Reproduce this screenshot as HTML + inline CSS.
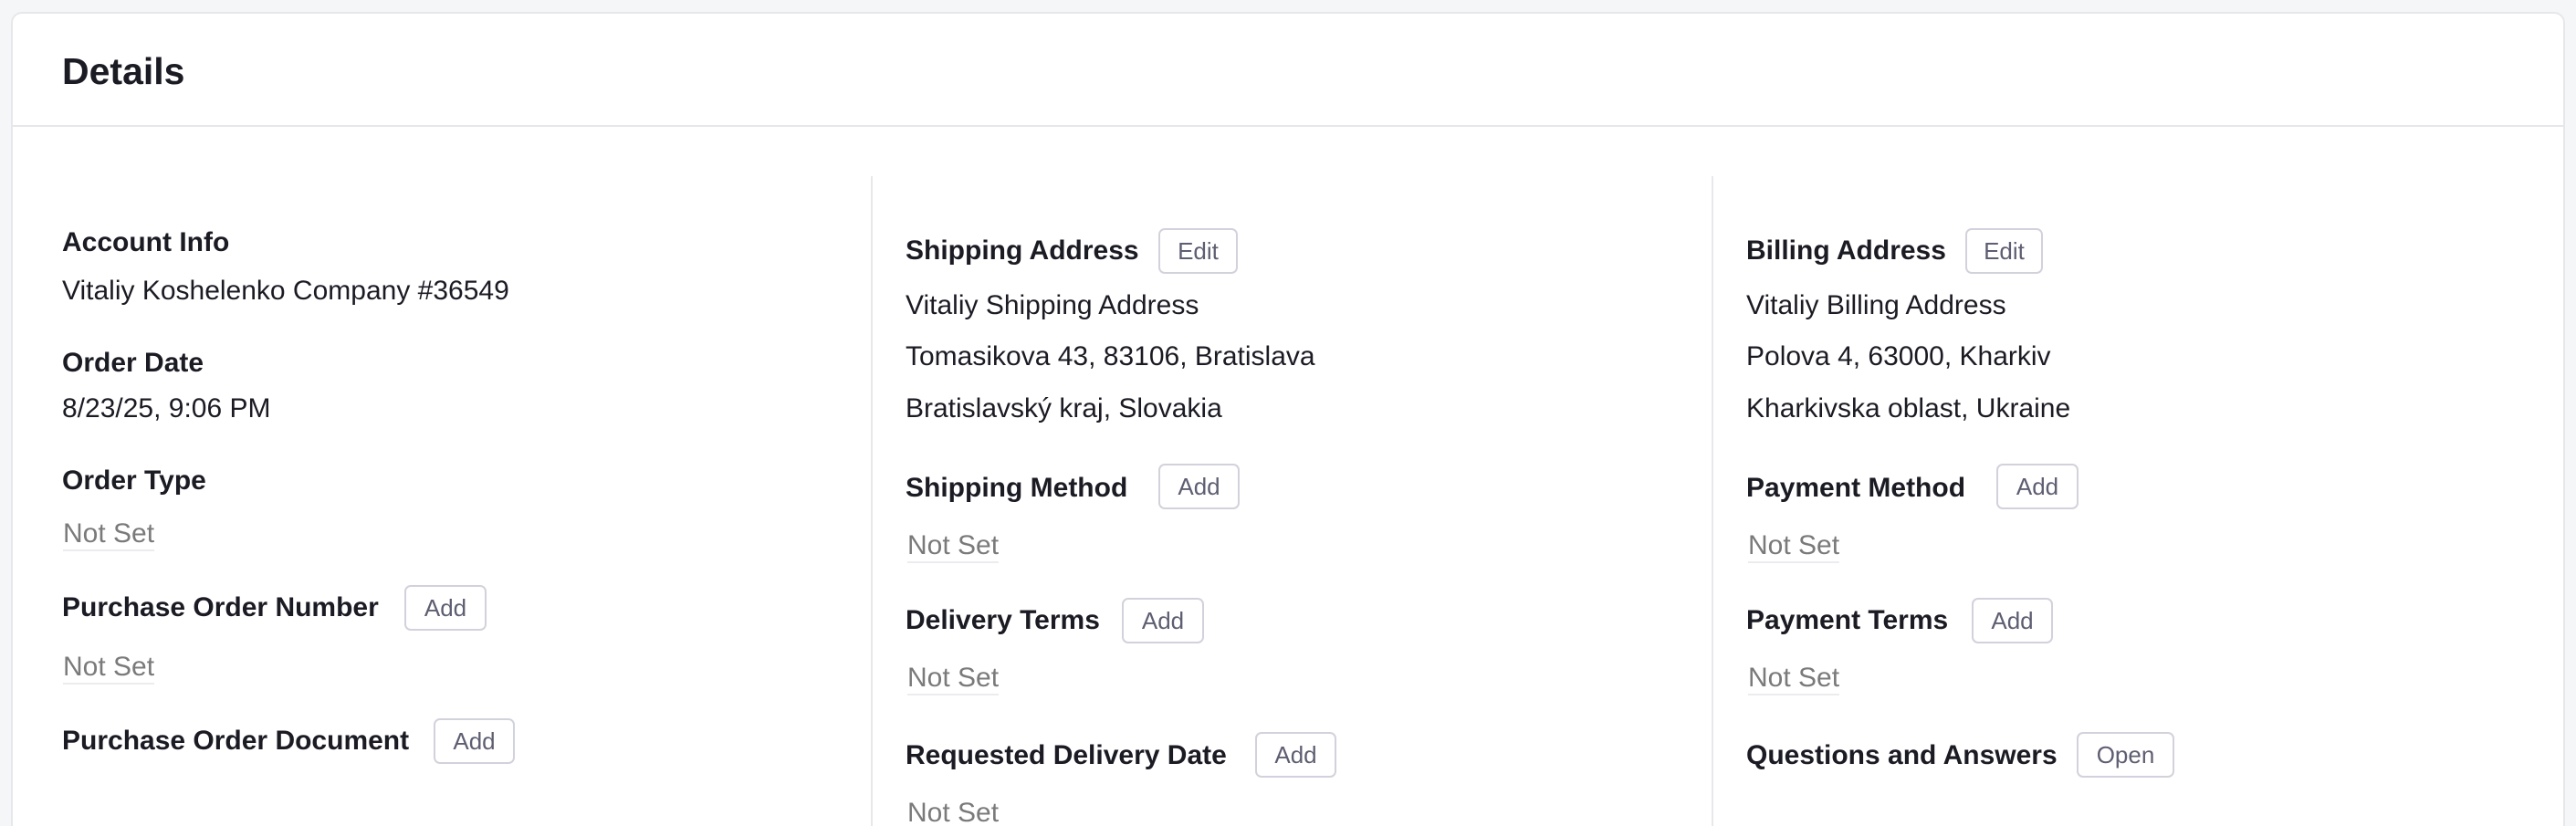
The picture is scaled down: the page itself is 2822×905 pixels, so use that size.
<!DOCTYPE html>
<html><head><meta charset="utf-8"><style>
html,body{margin:0;padding:0;width:2822px;height:905px;overflow:hidden;}
body{background:#f5f6f8;position:relative;font-family:"Liberation Sans",sans-serif;color:#1b1b24;}
.card{position:absolute;left:12px;top:13px;width:2798px;height:892px;background:#fff;border:2px solid #e6e7ea;border-bottom:none;border-radius:12px 12px 0 0;box-sizing:border-box;}
.hd{position:absolute;left:12px;top:137px;width:2798px;height:2px;background:#e6e7ea;}
.vd{position:absolute;top:193px;width:2px;height:712px;background:#e8e8ec;}
.t{position:absolute;line-height:40px;height:40px;white-space:nowrap;}
.l{font-weight:bold;font-size:30px;}
.v{font-size:30px;}
.n{font-size:30px;color:#7a7a7a;}
.n span{border-bottom:2px solid #ececf0;padding-bottom:1px;}
.b{position:absolute;border:2px solid #d2d2dc;border-radius:7px;box-sizing:border-box;height:50px;font-size:26px;color:#5e5e72;text-align:center;line-height:46px;background:#fff;}
</style></head><body>
<div class="card"></div>
<div class="hd"></div>
<div class="t" style="left:68px;top:58px;font-size:41px;font-weight:bold;">Details</div>
<div class="vd" style="left:954px"></div>
<div class="vd" style="left:1875px"></div>

<div class="t l" style="left:68px;top:246px">Account Info</div>
<div class="t v" style="left:68px;top:299px">Vitaliy Koshelenko Company #36549</div>
<div class="t l" style="left:68px;top:378px">Order Date</div>
<div class="t v" style="left:68px;top:428px">8/23/25, 9:06 PM</div>
<div class="t l" style="left:68px;top:507px">Order Type</div>
<div class="t n" style="left:69px;top:565px"><span>Not Set</span></div>
<div class="t l" style="left:68px;top:646px">Purchase Order Number</div>
<div class="b" style="left:443px;top:641px;width:90px">Add</div>
<div class="t n" style="left:69px;top:711px"><span>Not Set</span></div>
<div class="t l" style="left:68px;top:792px">Purchase Order Document</div>
<div class="b" style="left:475px;top:787px;width:89px">Add</div>

<div class="t l" style="left:992px;top:255px">Shipping Address</div>
<div class="b" style="left:1269px;top:250px;width:87px">Edit</div>
<div class="t v" style="left:992px;top:315px">Vitaliy Shipping Address</div>
<div class="t v" style="left:992px;top:371px">Tomasikova 43, 83106, Bratislava</div>
<div class="t v" style="left:992px;top:428px">Bratislavský kraj, Slovakia</div>
<div class="t l" style="left:992px;top:515px">Shipping Method</div>
<div class="b" style="left:1269px;top:508px;width:89px">Add</div>
<div class="t n" style="left:994px;top:578px"><span>Not Set</span></div>
<div class="t l" style="left:992px;top:660px">Delivery Terms</div>
<div class="b" style="left:1229px;top:655px;width:90px">Add</div>
<div class="t n" style="left:994px;top:723px"><span>Not Set</span></div>
<div class="t l" style="left:992px;top:808px">Requested Delivery Date</div>
<div class="b" style="left:1375px;top:802px;width:89px">Add</div>
<div class="t n" style="left:994px;top:871px"><span>Not Set</span></div>

<div class="t l" style="left:1913px;top:255px">Billing Address</div>
<div class="b" style="left:2153px;top:250px;width:85px">Edit</div>
<div class="t v" style="left:1913px;top:315px">Vitaliy Billing Address</div>
<div class="t v" style="left:1913px;top:371px">Polova 4, 63000, Kharkiv</div>
<div class="t v" style="left:1913px;top:428px">Kharkivska oblast, Ukraine</div>
<div class="t l" style="left:1913px;top:515px">Payment Method</div>
<div class="b" style="left:2187px;top:508px;width:90px">Add</div>
<div class="t n" style="left:1915px;top:578px"><span>Not Set</span></div>
<div class="t l" style="left:1913px;top:660px">Payment Terms</div>
<div class="b" style="left:2160px;top:655px;width:89px">Add</div>
<div class="t n" style="left:1915px;top:723px"><span>Not Set</span></div>
<div class="t l" style="left:1913px;top:808px">Questions and Answers</div>
<div class="b" style="left:2275px;top:802px;width:107px">Open</div>
</body></html>
